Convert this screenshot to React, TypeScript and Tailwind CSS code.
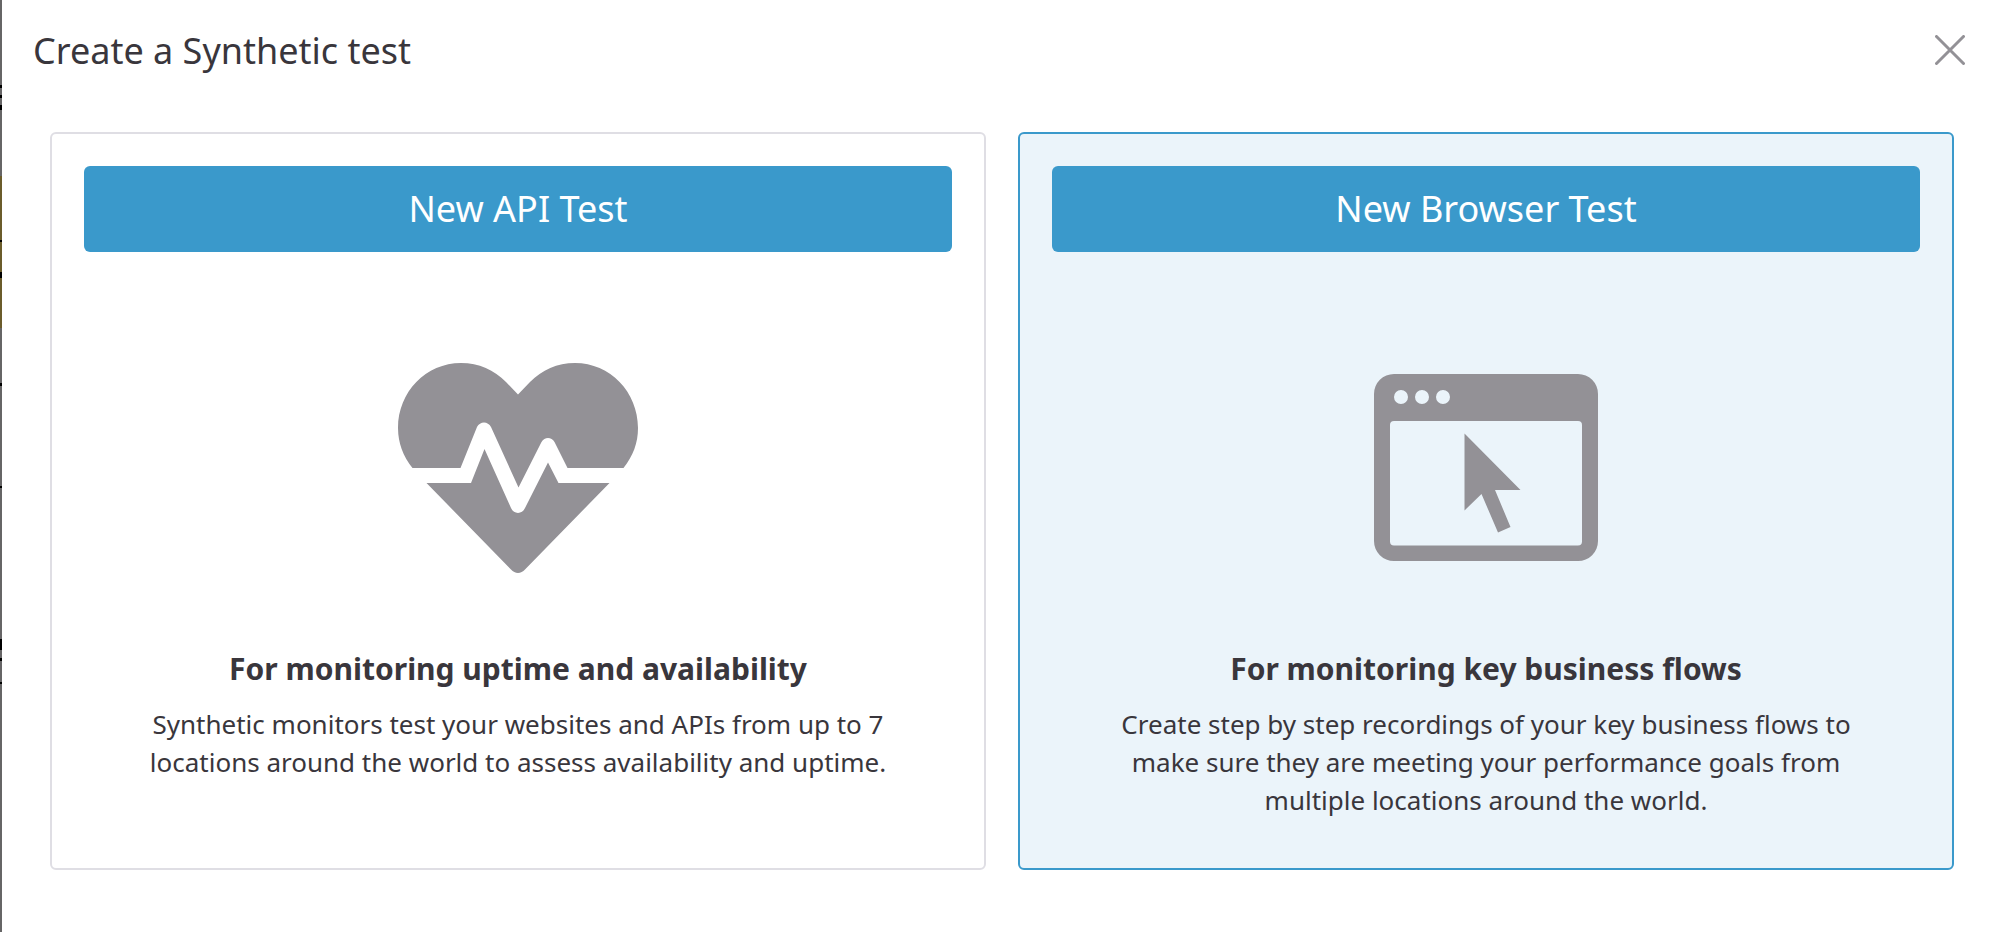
import type { ReactNode } from "react";

const backdropMarks = [
  { gap: "h-[85px]", mark: "h-[3px] bg-black" },
  { gap: "h-[7px]", mark: "h-[3px] bg-black" },
  { gap: "h-[7px]", mark: "h-[5px] bg-black" },
  { gap: "h-[66px]", mark: "h-[64px] bg-[#6b5c2b]" },
  { gap: "h-0", mark: "h-[2px] bg-black" },
  { gap: "h-0", mark: "h-[30px] bg-[#6b5c2b]" },
  { gap: "h-0", mark: "h-[6px] bg-black" },
  { gap: "h-0", mark: "h-[50px] bg-[#6b5c2b]" },
  { gap: "h-[55px]", mark: "h-[3px] bg-black" },
  { gap: "h-[100px]", mark: "h-[2px] bg-black" },
  { gap: "h-[151px]", mark: "h-[11px] bg-black" },
  { gap: "h-[8px]", mark: "h-[3px] bg-black" },
  { gap: "h-[21px]", mark: "h-[2px] bg-black" },
];

function HeartPulseIcon() {
  return (
    <svg viewBox="0 0 240 210" className="h-[210px] w-[240px]" aria-hidden="true">
      <path
        fill="#939196"
        d="M14.5 105 A64 64 0 0 1 0 65 C0 29 28 0 63 0 C81 0 96 7 108 19 L120 31.500 L132 19 C144 7 159 0 177 0 C212 0 240 29 240 65 C240 80 235 93 225.500 105 L169.500 105 L156.500 79 C153.500 73.500 146.500 73.500 143.500 79 L120.500 124.500 L93 64 C90 58 82 58 79 64 L62.500 105 Z"
      />
      <path
        fill="#939196"
        d="M28.500 120 L73 120 L86.500 86 L113 145 C116 151.500 124 151.500 127 145 L150 99.500 L160.500 120 L211.500 120 L127 206.500 C123 211 117 211 113 206.500 Z"
      />
    </svg>
  );
}

function BrowserCursorIcon() {
  return (
    <svg viewBox="0 0 224 188" className="h-[188px] w-[224px]" aria-hidden="true">
      <path
        fill="#939196"
        fillRule="evenodd"
        d="M20 0H204A20 20 0 0 1 224 20V167A20 20 0 0 1 204 187H20A20 20 0 0 1 0 167V20A20 20 0 0 1 20 0ZM20 47A4 4 0 0 0 16 51V167.500A4 4 0 0 0 20 171.500H204A4 4 0 0 0 208 167.500V51A4 4 0 0 0 204 47ZM20 23a7 7 0 1 0 14 0a7 7 0 1 0 -14 0M41 23a7 7 0 1 0 14 0a7 7 0 1 0 -14 0M62 23a7 7 0 1 0 14 0a7 7 0 1 0 -14 0"
      />
      <path fill="#939196" d="M90.500 59.500L146.500 116H121L136.500 153L124 158.500L107.500 120L90.500 136.500Z" />
    </svg>
  );
}

type TestCardProps = {
  action: string;
  icon: ReactNode;
  title: string;
  description: string;
  selected?: boolean;
};

function TestCard({ action, icon, title, description, selected = false }: TestCardProps) {
  return (
    <section
      className={`flex flex-1 flex-col rounded-md border-2 p-8 pb-12 text-center ${
        selected ? "border-[#3a99cb] bg-[#ebf4fa]" : "border-[#dfdee4] bg-white"
      }`}
    >
      <button type="button" className="h-[86px] w-full cursor-pointer rounded-md bg-[#3a99cb] text-4xl text-white">
        {action}
      </button>
      <div className="flex h-[432px] items-center justify-center">{icon}</div>
      <div className="-mt-9 px-16">
        <h2 className="text-[30px] leading-[42px] font-bold">{title}</h2>
        <p className="mt-[15px] text-[26px] leading-[38px]">{description}</p>
      </div>
    </section>
  );
}

export default function App() {
  return (
    <div className="flex min-h-screen bg-white font-['Noto_Sans',sans-serif] text-[#39363c]">
      <div className="w-[2px] shrink-0 bg-[#666566]" aria-hidden="true">
        {backdropMarks.map((item, index) => (
          <div key={index}>
            <div className={item.gap} />
            <div className={item.mark} />
          </div>
        ))}
      </div>
      <main className="min-w-0 flex-1">
        <header className="flex h-[102px] items-center justify-between pr-[35px] pl-[31px]">
          <h1 className="text-4xl">Create a Synthetic test</h1>
          <button type="button" aria-label="Close" className="cursor-pointer pb-0.5">
            <svg viewBox="0 0 30 30" className="size-[30px]" aria-hidden="true">
              <path d="M1.500 1.500L28.500 28.500M28.500 1.500L1.500 28.500" stroke="#939196" strokeWidth="3" strokeLinecap="round" />
            </svg>
          </button>
        </header>
        <div className="mt-[30px] flex min-h-[738px] gap-8 pr-[46px] pl-12">
          <TestCard
            action="New API Test"
            icon={<HeartPulseIcon />}
            title="For monitoring uptime and availability"
            description="Synthetic monitors test your websites and APIs from up to 7 locations around the world to assess availability and uptime."
          />
          <TestCard
            action="New Browser Test"
            icon={<BrowserCursorIcon />}
            title="For monitoring key business flows"
            description="Create step by step recordings of your key business flows to make sure they are meeting your performance goals from multiple locations around the world."
            selected
          />
        </div>
      </main>
    </div>
  );
}
